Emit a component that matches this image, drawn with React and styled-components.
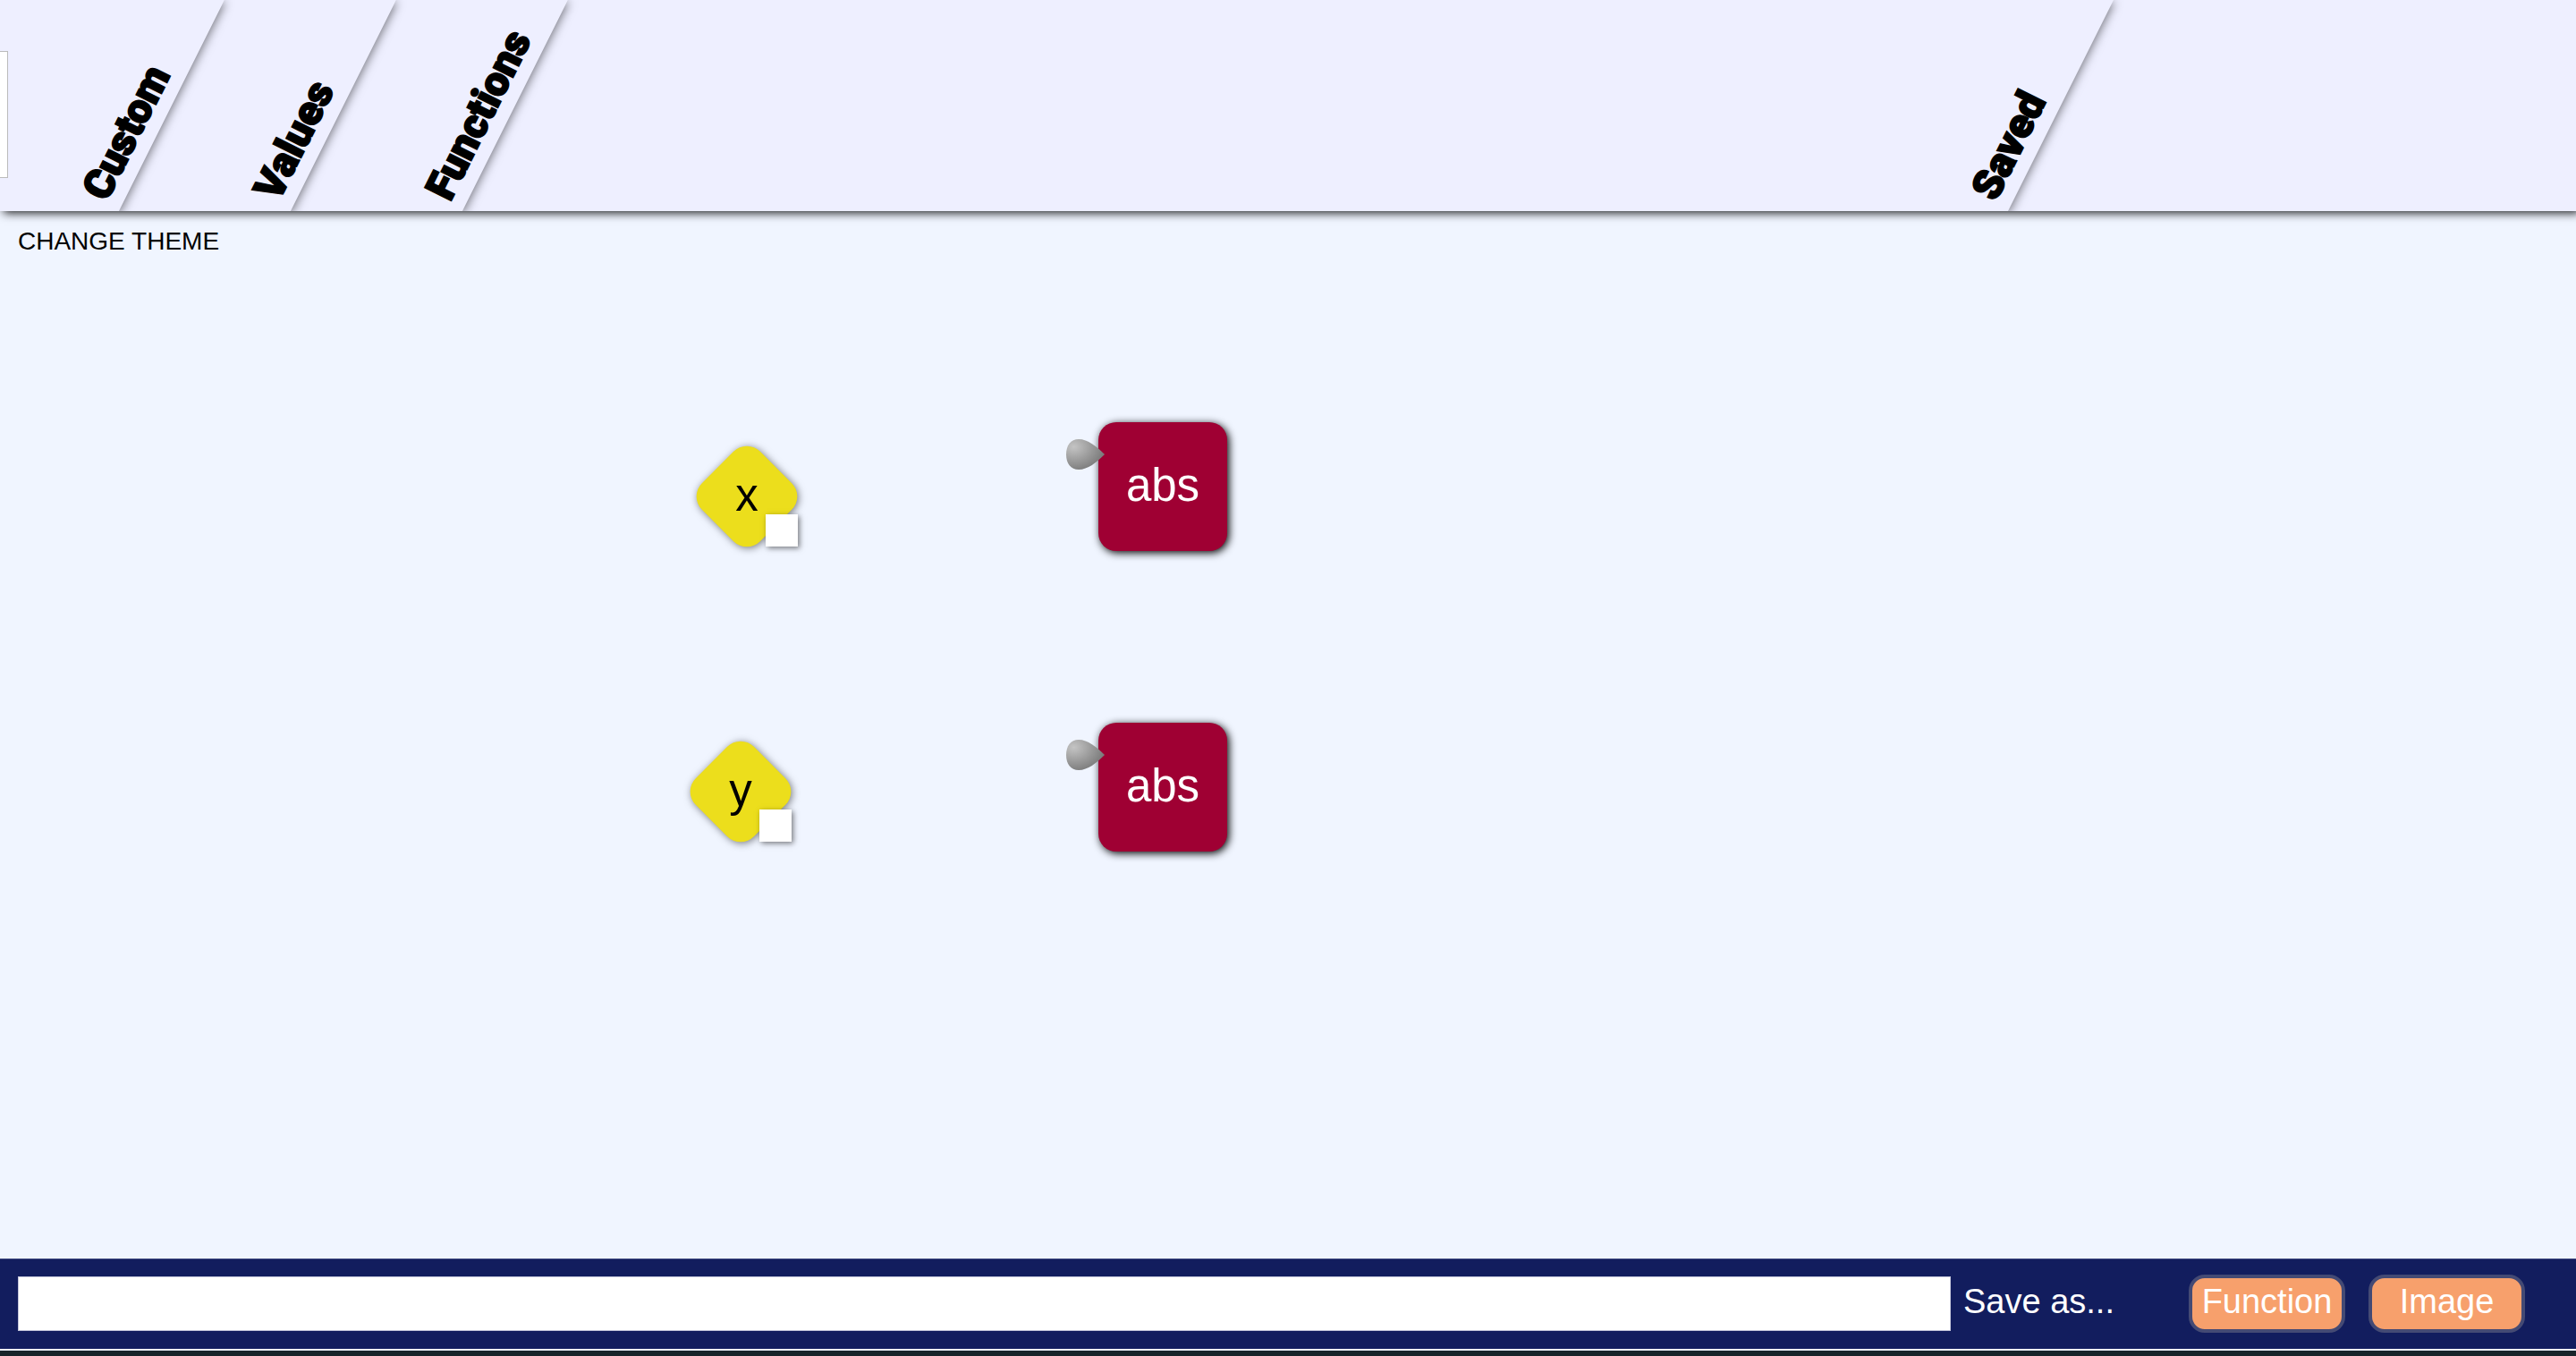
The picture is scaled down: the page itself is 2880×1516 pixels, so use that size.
import React from "react";
import styled, { createGlobalStyle } from "styled-components";

const Global = createGlobalStyle`
  * { box-sizing: border-box; }
  html, body, #root { height: 100%; }
  body {
    margin: 0;
    background: #18242a;
    font-family: Arial, "Liberation Sans", sans-serif;
    overflow: hidden;
  }
  button, input { font-family: inherit; }
`;

const Page = styled.div`
  display: flex;
  flex-direction: column;
  height: 100%;
`;

const Header = styled.header`
  position: relative;
  z-index: 2;
  background: #eeefff;
  box-shadow: 4px 2px 10px rgba(0, 0, 0, 0.9);
`;

const Tabs = styled.nav`
  display: flex;
  height: 236px;
  overflow: hidden;
`;

const Peek = styled.div`
  position: relative;
  z-index: 9;
  width: 9px;
  height: 142px;
  margin-top: 57px;
  background: #fff;
  border: 1px solid #bbb;
  border-left: 0;
`;

const Tab = styled.button`
  position: relative;
  z-index: ${(p) => p.$level};
  display: flex;
  justify-content: flex-end;
  align-items: flex-end;
  flex: ${(p) => (p.$grow ? "1 1 0" : "0 0 auto")};
  width: ${(p) => (p.$first ? 324 : 192)}px;
  margin: 0 0 0 ${(p) => (p.$first ? -200 : 0)}px;
  padding: 0;
  border: 0;
  background: #eeefff;
  box-shadow: 2px 2px 10px rgba(0, 0, 0, 0.5);
  transform: skewX(-26.565deg);
  transform-origin: bottom left;
  cursor: pointer;
`;

const TabLabel = styled.span`
  width: 0;
  padding-left: 4px;
  color: #000;
  font: 900 46px/58px Impact, Roboto, "Liberation Sans", sans-serif;
  white-space: nowrap;
  text-align: left;
  -webkit-text-stroke: 2px #000;
  transform: skewX(26.565deg) rotate(-63.435deg);
  transform-origin: bottom left;
`;

const Tail = styled.div`
  width: 635px;
`;

const Canvas = styled.main`
  position: relative;
  flex: 1;
  padding: 18px 20px;
  background: #f0f5ff;
`;

const ThemeButton = styled.button`
  padding: 0;
  border: 0;
  background: none;
  color: #000;
  font-size: 28px;
  line-height: 32px;
  cursor: pointer;
`;

const Node = styled.div`
  position: absolute;
  left: ${(p) => p.$x}px;
  top: ${(p) => p.$y}px;
  display: flex;
  align-items: center;
  justify-content: center;
  width: ${(p) => p.$size}px;
  height: ${(p) => p.$size}px;
  font-size: 51px;
  line-height: 56px;
`;

const Diamond = styled.div`
  position: absolute;
  inset: 0;
  border-radius: 21px;
  background: #ecde1c;
  box-shadow: 2px 0 8px rgba(0, 0, 0, 0.5);
  transform: rotate(45deg);
`;

const Square = styled.div`
  position: absolute;
  inset: 0;
  border-radius: 20px;
  background: #9f0033;
  box-shadow: 2px 2px 10px #000;
`;

const NodeText = styled.span`
  position: relative;
  padding-bottom: 2px;
  color: ${(p) => p.$color};
`;

const Outlet = styled.div`
  position: absolute;
  left: 67px;
  top: 66px;
  width: 36px;
  height: 36px;
  background: #fff;
  box-shadow: 2px 2px 6px rgba(0, 0, 0, 0.5);
`;

const Inlet = styled.svg`
  position: absolute;
  left: -36px;
  top: 19px;
  width: 43px;
  height: 34px;
`;

const Footer = styled.footer`
  display: flex;
  align-items: center;
  height: 101px;
  padding: 0 57px 1px 20px;
  background: #121d5e;
  border-top: 1px solid #40497f;
`;

const FormulaInput = styled.input`
  flex: 1;
  min-width: 0;
  height: 61px;
  padding: 0 12px;
  border: 1px solid #c3c5da;
  border-radius: 0;
  background: #fff;
  font-size: 38px;
`;

const SaveLabel = styled.span`
  width: 238px;
  margin: 0 14px;
  color: #fff;
  font-size: 38px;
  line-height: 44px;
  padding-bottom: 6px;
`;

const SaveButtons = styled.div`
  display: flex;
  gap: 26px;
`;

const SaveButton = styled.button`
  width: 175px;
  height: 65px;
  padding: 0 0 6px;
  border: 4px solid #444a74;
  border-radius: 18px;
  background: #f7a06c;
  color: #fff;
  font-size: 38px;
  line-height: 44px;
  cursor: pointer;
`;

const BottomLine = styled.div`
  height: 8px;
  border-top: 2px solid #f0f5ff;
  background: #18242a;
`;

function ValueNode({ x, y, name }) {
  return (
    <Node $x={x} $y={y} $size={92}>
      <Diamond />
      <NodeText $color="#000">{name}</NodeText>
      <Outlet />
    </Node>
  );
}

function FunctionNode({ id, x, y, name }) {
  return (
    <Node $x={x} $y={y} $size={144}>
      <Square />
      <NodeText $color="#fff">{name}</NodeText>
      <Inlet viewBox="0 0 43 34" aria-hidden="true">
        <defs>
          <radialGradient id={id} cx="0.2" cy="0.25" r="0.8">
            <stop offset="0" stopColor="#c4c4c4" />
            <stop offset="1" stopColor="#7c7c7c" />
          </radialGradient>
        </defs>
        <path d="M43 17C34 8 24 0 14 0C5 0 0 7 0 17C0 27 5 34 14 34C24 34 34 26 43 17Z" fill={`url(#${id})`} />
      </Inlet>
    </Node>
  );
}

export default function App() {
  return (
    <>
      <Global />
      <Page>
        <Header>
          <Tabs aria-label="Blocks">
            <Peek />
            <Tab $first $level={5}><TabLabel>Custom</TabLabel></Tab>
            <Tab $level={4}><TabLabel>Values</TabLabel></Tab>
            <Tab $level={3}><TabLabel>Functions</TabLabel></Tab>
            <Tab $grow $level={2}><TabLabel>Saved</TabLabel></Tab>
            <Tail />
          </Tabs>
        </Header>
        <Canvas>
          <ThemeButton>CHANGE THEME</ThemeButton>
          <ValueNode x={789} y={273} name="x" />
          <ValueNode x={782} y={603} name="y" />
          <FunctionNode id="inlet-a" x={1228} y={236} name="abs" />
          <FunctionNode id="inlet-b" x={1228} y={572} name="abs" />
        </Canvas>
        <Footer>
          <FormulaInput type="text" aria-label="Formula" />
          <SaveLabel>Save as...</SaveLabel>
          <SaveButtons>
            <SaveButton>Function</SaveButton>
            <SaveButton>Image</SaveButton>
          </SaveButtons>
        </Footer>
        <BottomLine />
      </Page>
    </>
  );
}
